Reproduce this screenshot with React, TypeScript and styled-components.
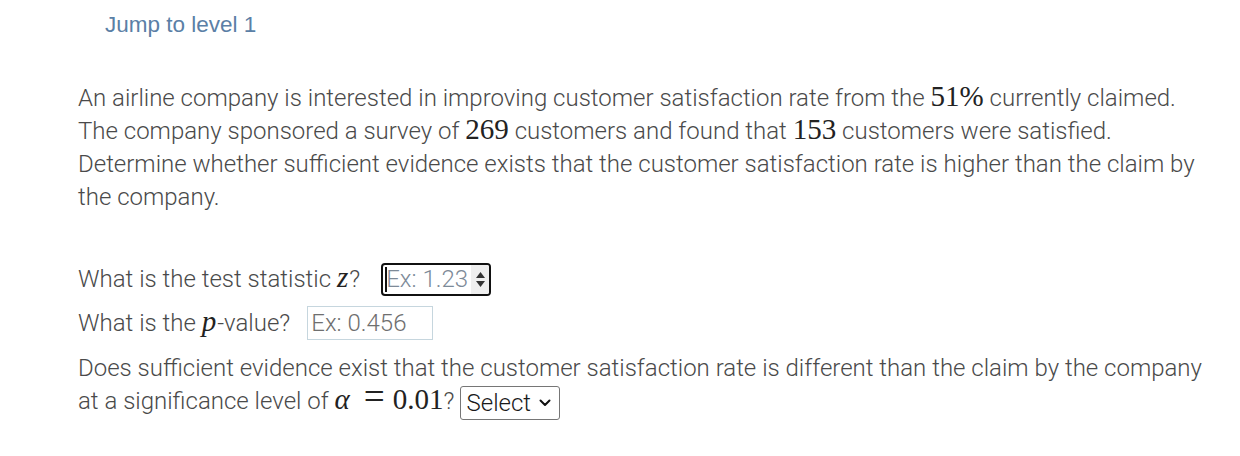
import React from "react";
import styled, { createGlobalStyle } from "styled-components";

const Global = createGlobalStyle`
  html, body { margin: 0; padding: 0; background: #fff; }
  body { font-family: Roboto, "Noto Sans", sans-serif; }
`;

const Page = styled.div`
  width: 1240px;
  height: 456px;
  box-sizing: border-box;
  padding: 12px 0 0 78px;
  display: flex;
  flex-direction: column;
  overflow: hidden;
`;

const JumpLink = styled.a`
  font-family: "Liberation Sans", Arial, sans-serif;
  font-size: 22.5px;
  color: #5b7fa6;
  text-decoration: none;
  margin-left: 27px;
  line-height: 26px;
  align-self: flex-start;
`;

const textBase = `
  font-size: 24px;
  font-weight: 300;
  color: #4a4a4a;
  line-height: 33px;
`;

const Paragraph = styled.p`
  margin: 44px 0 0 0;
  ${textBase}
  max-width: 1130px;
`;

const Num = styled.span`
  font-family: "Liberation Serif", "Times New Roman", serif;
  font-size: 1.21em;
  font-weight: 400;
  line-height: 0;
  color: #222;
`;

const Var = styled.span`
  font-family: "Liberation Serif", "Times New Roman", serif;
  font-style: italic;
  font-size: 1.21em;
  font-weight: 400;
  line-height: 0;
  color: #222;
  padding-right: 1px;
`;

const Rel = styled.span`
  font-family: "Liberation Serif", "Times New Roman", serif;
  font-size: 1.55em;
  line-height: 0;
  color: #222;
  margin: 0 8px 0 13px;
`;

const Row = styled.div<{ $top: number }>`
  display: flex;
  align-items: center;
  gap: 17px;
  margin-top: ${(p) => p.$top}px;
  ${textBase}
`;

const Label = styled.span``;

const FocusField = styled.div`
  display: flex;
  align-items: stretch;
  width: 106px;
  height: 29px;
  border: 2px solid #111;
  border-radius: 4px;
  box-sizing: content-box;
  overflow: hidden;
  position: relative;
  margin-left: 4px;
`;

const Caret = styled.span`
  position: absolute;
  left: 2px;
  top: 2px;
  bottom: 2px;
  width: 2px;
  background: #111;
`;

const FieldText = styled.span<{ $color: string }>`
  flex: 1;
  padding-left: 3px;
  font-size: 24px;
  font-weight: 300;
  color: ${(p) => p.$color};
  line-height: 29px;
  white-space: nowrap;
  overflow: hidden;
`;

const Spinner = styled.span`
  width: 18px;
  background: #efefef;
  display: flex;
  flex-direction: column;
  align-items: center;
  justify-content: center;
  gap: 3px;
`;

const PlainField = styled.div`
  width: 124px;
  height: 32px;
  border: 1px solid #c6d6de;
  display: flex;
  align-items: center;
  box-sizing: content-box;
`;

const SelectBox = styled.span`
  display: inline-flex;
  align-items: center;
  gap: 8px;
  width: 100px;
  height: 34px;
  padding: 0 6px;
  border: 1px solid #767676;
  border-radius: 3px;
  margin: -4px 0 -4px 5px;
  font-size: 24px;
  font-weight: 300;
  color: #1a1a1a;
  vertical-align: middle;
  box-sizing: border-box;
  line-height: 32px;
`;

const Question = styled.p`
  margin: 12px 0 0 0;
  ${textBase}
  max-width: 1130px;
`;

const Tri = ({ up }: { up: boolean }) => (
  <svg width="9" height="6" viewBox="0 0 9 6">
    <path d={up ? "M4.5 0 L9 6 L0 6 Z" : "M0 0 L9 0 L4.5 6 Z"} fill="#333" />
  </svg>
);

const Chevron = () => (
  <svg width="12" height="8" viewBox="0 0 12 8">
    <path d="M1.5 1.5 L6 6 L10.5 1.5" fill="none" stroke="#111" strokeWidth="2" strokeLinecap="round" strokeLinejoin="round" />
  </svg>
);

export default function App() {
  return (
    <>
      <Global />
      <Page>
        <JumpLink href="#">Jump to level 1</JumpLink>
        <Paragraph>
          An airline company is interested in improving customer satisfaction rate from the <Num>51%</Num> currently claimed.
          The company sponsored a survey of <Num>269</Num> customers and found that <Num>153</Num> customers were satisfied.
          Determine whether sufficient evidence exists that the customer satisfaction rate is higher than the claim by
          the company.
        </Paragraph>
        <Row $top={49}>
          <Label>
            What is the test statistic <Var>z</Var>?
          </Label>
          <FocusField>
            <Caret />
            <FieldText $color="#7d8a98">Ex: 1.23</FieldText>
            <Spinner>
              <Tri up />
              <Tri up={false} />
            </Spinner>
          </FocusField>
        </Row>
        <Row $top={10}>
          <Label>
            What is the <Var>p</Var>-value?
          </Label>
          <PlainField>
            <FieldText $color="#6f6f6f">Ex: 0.456</FieldText>
          </PlainField>
        </Row>
        <Question>
          Does sufficient evidence exist that the customer satisfaction rate is different than the claim by the company
          at a significance level of <Var>α</Var><Rel>=</Rel><Num>0.01</Num>?
          <SelectBox>
            Select <Chevron />
          </SelectBox>
        </Question>
      </Page>
    </>
  );
}
